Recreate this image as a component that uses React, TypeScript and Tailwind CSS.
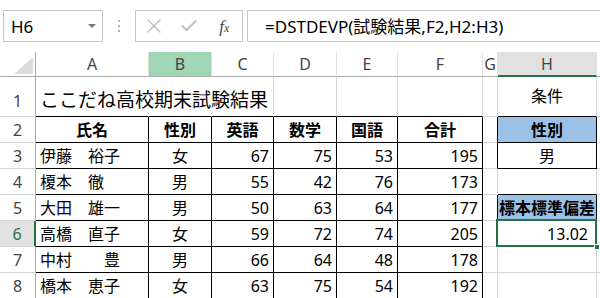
import type { ReactNode } from "react";
import { X, Check } from "lucide-react";

type Edge = "g" | "k" | "n";

const rightEdge = (e: Edge) =>
  e === "k" ? "border-r-black" : e === "n" ? "border-r-transparent" : "border-r-[#d4d4d4]";
const bottomEdge = (e: Edge) =>
  e === "k" ? "border-b-black" : e === "n" ? "border-b-transparent" : "border-b-[#d4d4d4]";

function Cell({
  r = "g",
  b = "g",
  className = "",
  children,
}: {
  r?: Edge;
  b?: Edge;
  className?: string;
  children?: ReactNode;
}) {
  return (
    <div
      className={`relative flex min-w-0 items-center whitespace-nowrap border-r border-b px-[4px] text-[16px] leading-none text-black ${rightEdge(
        r
      )} ${bottomEdge(b)} ${className}`}
    >
      {children}
    </div>
  );
}

function RowHead({ n, active = false, tall = false }: { n: number; active?: boolean; tall?: boolean }) {
  return (
    <div
      className={`flex justify-center border-b border-b-[#d4d4d4] text-[16px] leading-none ${
        tall ? "items-end pb-[7px]" : "items-center"
      } ${
        active
          ? "border-r-2 border-r-[#217346] bg-[#e1e1e1] text-[#217346]"
          : "border-r border-r-[#ababab] text-[#444444]"
      }`}
    >
      {n}
    </div>
  );
}

const students = [
  { name: "伊藤　裕子", sex: "女", en: 67, ma: 75, ja: 53, sum: 195 },
  { name: "榎本　徹", sex: "男", en: 55, ma: 42, ja: 76, sum: 173 },
  { name: "大田　雄一", sex: "男", en: 50, ma: 63, ja: 64, sum: 177 },
  { name: "高橋　直子", sex: "女", en: 59, ma: 72, ja: 74, sum: 205 },
  { name: "中村　　豊", sex: "男", en: 66, ma: 64, ja: 48, sum: 178 },
  { name: "橋本　恵子", sex: "女", en: 63, ma: 75, ja: 54, sum: 192 },
];

function FormulaBar() {
  return (
    <div className="flex h-[52px] items-start bg-white pt-[10px] pl-[3px]">
      <div className="flex h-[32px] w-[100px] items-center justify-between border border-[#c6c6c6] pr-[6px] pl-[7px]">
        <span className="text-[17px] leading-none text-black">H6</span>
        <span className="h-0 w-0 border-x-[4px] border-t-[4px] border-x-transparent border-t-[#777777]" />
      </div>
      <div className="flex h-[32px] w-[32px] flex-col items-center justify-center gap-[3px]">
        <span className="h-[2px] w-[2px] bg-[#b0b0b0]" />
        <span className="h-[2px] w-[2px] bg-[#b0b0b0]" />
        <span className="h-[2px] w-[2px] bg-[#b0b0b0]" />
      </div>
      <div className="flex h-[32px] w-[108px] items-center border border-[#c6c6c6]">
        <span className="flex w-[36px] justify-center">
          <X size={24} strokeWidth={1.2} className="text-[#b8b8b8]" />
        </span>
        <span className="flex w-[36px] justify-center">
          <Check size={20} strokeWidth={2.8} className="text-[#c4c4c4]" />
        </span>
        <span className="flex w-[36px] items-baseline justify-center font-['Liberation_Serif',serif] italic leading-none text-[#444444]">
          <span className="text-[17px]">f</span>
          <span className="text-[12px]">x</span>
        </span>
      </div>
      <div className="ml-[4px] flex h-[32px] flex-1 items-center border border-r-0 border-[#c6c6c6] pl-[17px]">
        <span className="text-[17px] leading-none text-black">=DSTDEVP(試験結果,F2,H2:H3)</span>
      </div>
    </div>
  );
}

function ColHead({ label, className = "" }: { label: string; className?: string }) {
  return (
    <div
      className={`flex items-center justify-center border-r border-r-[#e0e0e0] text-[16px] leading-none text-[#444444] ${className}`}
    >
      {label}
    </div>
  );
}

export default function App() {
  return (
    <div className="h-[298px] w-[600px] overflow-hidden bg-white font-['Noto_Sans','Noto_Sans_CJK_JP',sans-serif]">
      <FormulaBar />
      <div className="grid grid-cols-[36px_113px_63px_62px_63px_61px_85px_15px_99px_1fr] grid-rows-[25px_40px_26px_26px_26px_26px_26px_26px_26px_26px]">
        {/* column headers */}
        <div className="relative border-r border-b border-r-[#ababab] border-b-[#ababab]">
          <svg className="absolute left-[14px] top-[5px]" width="19" height="17" viewBox="0 0 19 17">
            <polygon points="0,17 19,17 19,0" fill="#dcdcdc" />
          </svg>
        </div>
        <ColHead label="A" className="border-b border-b-[#ababab]" />
        <ColHead label="B" className="border-b border-b-[#ababab] bg-[#a0d6b4]" />
        <ColHead label="C" className="border-b border-b-[#ababab]" />
        <ColHead label="D" className="border-b border-b-[#ababab]" />
        <ColHead label="E" className="border-b border-b-[#ababab]" />
        <ColHead label="F" className="border-b border-b-[#ababab]" />
        <ColHead label="G" className="border-b border-b-[#ababab]" />
        <ColHead label="H" className="border-b-2 border-b-[#217346] bg-[#e1e1e1] text-[#217346]" />
        <ColHead label="" className="border-b border-b-[#ababab]" />

        {/* row 1 */}
        <RowHead n={1} tall />
        <Cell r="n" b="k" className="items-end overflow-visible pb-[6px]">
          <span className="relative z-10 text-[19px] leading-none">ここだね高校期末試験結果</span>
        </Cell>
        <Cell r="n" b="k" />
        <Cell b="k" />
        <Cell b="k" />
        <Cell b="k" />
        <Cell b="k" />
        <Cell />
        <Cell b="k" className="items-end justify-center pb-[12px]">
          条件
        </Cell>
        <Cell />

        {/* row 2 */}
        <RowHead n={2} />
        {["氏名", "性別", "英語", "数学", "国語", "合計"].map((h) => (
          <Cell key={h} r="k" b="k" className="justify-center font-bold">
            {h}
          </Cell>
        ))}
        <Cell r="k" />
        <Cell r="k" b="k" className="justify-center bg-[#9bc2e6] font-bold">
          性別
        </Cell>
        <Cell />

        {/* rows 3-8 */}
        {students.map((s, i) => {
          const row = i + 3;
          return [
            <RowHead key={`h${row}`} n={row} active={row === 6} />,
            <Cell key={`a${row}`} r="k" b="k">
              {s.name}
            </Cell>,
            <Cell key={`b${row}`} r="k" b="k" className="justify-center">
              {s.sex}
            </Cell>,
            <Cell key={`c${row}`} r="k" b="k" className="justify-end">
              {s.en}
            </Cell>,
            <Cell key={`d${row}`} r="k" b="k" className="justify-end">
              {s.ma}
            </Cell>,
            <Cell key={`e${row}`} r="k" b="k" className="justify-end">
              {s.ja}
            </Cell>,
            <Cell key={`f${row}`} r="k" b="k" className="justify-end">
              {s.sum}
            </Cell>,
            <Cell key={`g${row}`} r={row === 3 || row === 5 || row === 6 ? "k" : "g"} />,
            row === 3 ? (
              <Cell key="h3" r="k" b="k" className="justify-center">
                男
              </Cell>
            ) : row === 4 ? (
              <Cell key="h4" b="k" />
            ) : row === 5 ? (
              <Cell key="h5" r="k" b="k" className="justify-center overflow-visible bg-[#9bc2e6] px-0 font-bold">
                標本標準偏差
              </Cell>
            ) : row === 6 ? (
              <Cell key="h6" className="justify-end pr-[8px]">
                13.02
                <span className="pointer-events-none absolute -top-[2px] -right-[1px] -bottom-[1px] -left-[2px] border-2 border-[#217346]" />
                <span className="absolute -right-[4px] -bottom-[4px] z-10 h-[6px] w-[6px] border border-white bg-[#217346]" />
              </Cell>
            ) : (
              <Cell key={`h${row}x`} />
            ),
            <Cell key={`i${row}`} />,
          ];
        })}
      </div>
    </div>
  );
}
